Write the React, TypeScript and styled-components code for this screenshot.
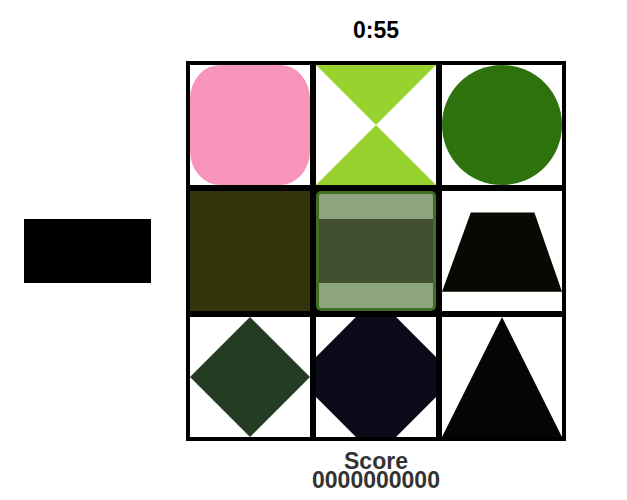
import React from 'react'
import styled, { createGlobalStyle } from 'styled-components'

const GlobalStyle = createGlobalStyle`
  html, body {
    margin: 0;
    padding: 0;
    background: #ffffff;
    font-family: 'Liberation Sans', Arial, sans-serif;
  }
`

const Page = styled.div`
  display: grid;
  grid-template-columns: 127px 380px;
  grid-template-rows: auto auto auto;
  column-gap: 35px;
  padding: 19px 0 0 24px;
`

const Timer = styled.div`
  grid-column: 2;
  grid-row: 1;
  text-align: center;
  font-size: 23px;
  line-height: 23px;
  font-weight: bold;
  color: #000;
  margin-bottom: 19px;
`

const Preview = styled.div`
  grid-column: 1;
  grid-row: 2;
  align-self: center;
  width: 127px;
  height: 64px;
  background: #000;
`

const Board = styled.div`
  grid-column: 2;
  grid-row: 2;
  display: grid;
  grid-template-columns: repeat(3, 120px);
  grid-template-rows: repeat(3, 120px);
  gap: 6px;
  border: 4px solid #000;
  background: #000;
`

const Cell = styled.div<{ $selected?: boolean }>`
  position: relative;
  background: #fff;
  overflow: hidden;
  ${(p) =>
    p.$selected &&
    `
    border: 3px solid #3f6e24;
    border-radius: 5px;
    background: #8da57e;
    display: flex;
    align-items: center;
  `}
`

const Shape = styled.div<{ $color: string; $clip?: string; $radius?: string }>`
  width: 100%;
  height: 100%;
  background: ${(p) => p.$color};
  ${(p) => (p.$clip ? `clip-path: polygon(${p.$clip});` : '')}
  ${(p) => (p.$radius ? `border-radius: ${p.$radius};` : '')}
`

const Band = styled.div`
  width: 100%;
  height: 64px;
  background: #414f2f;
`

const Score = styled.div`
  grid-column: 2;
  grid-row: 3;
  margin-top: 11px;
  text-align: center;
  font-size: 23px;
  font-weight: bold;
  color: #333;
`

const ScoreLine = styled.div`
  height: 19px;
  line-height: 19px;
`

export default function App() {
  return (
    <>
      <GlobalStyle />
      <Page>
        <Timer>0:55</Timer>
        <Preview />
        <Board>
          <Cell>
            <Shape $color="#f794bb" $radius="30px / 34px" />
          </Cell>
          <Cell>
            <Shape $color="#97d22e" $clip="0 0, 100% 0, 50% 50%, 100% 100%, 0 100%, 50% 50%" />
          </Cell>
          <Cell>
            <Shape $color="#2e720e" $radius="50%" />
          </Cell>
          <Cell>
            <Shape $color="#33350c" />
          </Cell>
          <Cell $selected>
            <Band />
          </Cell>
          <Cell>
            <Shape $color="#070a02" $clip="24% 18%, 77% 18%, 100% 84%, 0 84%" />
          </Cell>
          <Cell>
            <Shape $color="#243d22" $clip="50% 0, 100% 50%, 50% 100%, 0 50%" />
          </Cell>
          <Cell>
            <Shape
              $color="#0b0a18"
              $clip="33.3% 0, 66.7% 0, 100% 33.3%, 100% 66.7%, 66.7% 100%, 33.3% 100%, 0 66.7%, 0 33.3%"
            />
          </Cell>
          <Cell>
            <Shape $color="#050505" $clip="50% 0, 100% 100%, 0 100%" />
          </Cell>
        </Board>
        <Score>
          <ScoreLine>Score</ScoreLine>
          <ScoreLine>0000000000</ScoreLine>
        </Score>
      </Page>
    </>
  )
}
